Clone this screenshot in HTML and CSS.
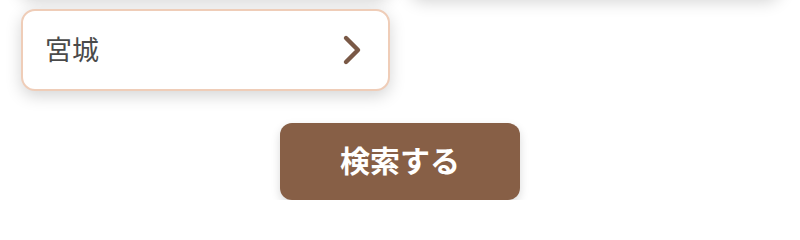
FILE: index.html
```html
<!DOCTYPE html>
<html lang="ja">
<head>
<meta charset="utf-8">
<link rel="stylesheet" href="styles.css">
</head>
<body>
<div class="form">
  <div class="grid">
    <div class="card prev"></div>
    <div class="card prev"></div>
    <div class="card select">
      <span class="label">宮城</span>
      <svg class="chev" width="22" height="32" viewBox="0 0 22 32"><path d="M5 4 L17 16 L5 28" fill="none" stroke="#7a5946" stroke-width="4.4" stroke-linecap="round" stroke-linejoin="round"/></svg>
    </div>
  </div>
  <div class="actions">
    <button class="submit"><span class="submit-text">検索する</span></button>
  </div>
</div>
</body>
</html>
```
FILE: styles.css
```css
html, body {
  margin: 0;
  padding: 0;
  background: #ffffff;
  font-family: "Noto Sans CJK JP", "Noto Sans", sans-serif;
}
.form {
  padding: 0 20px;
}
.grid {
  display: grid;
  grid-template-columns: 1fr 1fr;
  column-gap: 20px;
  row-gap: 12px;
  margin-top: -85px;
}
.card {
  box-sizing: border-box;
  height: 82px;
  background: #fff;
  border-radius: 14px;
  box-shadow: 0 5px 16px rgba(0, 0, 0, 0.17);
}
.prev {
  border: 2px solid #f0d2bf;
}
.select {
  margin-left: 1px;
  border: 2px solid #efcdb8;
  display: flex;
  align-items: center;
  justify-content: space-between;
  padding: 0 25px 0 22px;
}
.label {
  font-size: 27px;
  font-weight: 400;
  color: #4a4a4a;
  line-height: 1;
  padding-bottom: 4px;
}
.chev {
  display: block;
}
.actions {
  display: flex;
  justify-content: center;
  margin-top: 32px;
}
.submit {
  width: 240px;
  height: 77px;
  border: none;
  border-radius: 12px;
  background: #875f46;
  color: #fff;
  font-family: "Noto Sans CJK JP", "Noto Sans", sans-serif;
  font-weight: 700;
  font-size: 30px;
  line-height: 1;
  box-shadow: 0 4px 10px rgba(0, 0, 0, 0.15);
  padding: 0 0 5px;
}
```
